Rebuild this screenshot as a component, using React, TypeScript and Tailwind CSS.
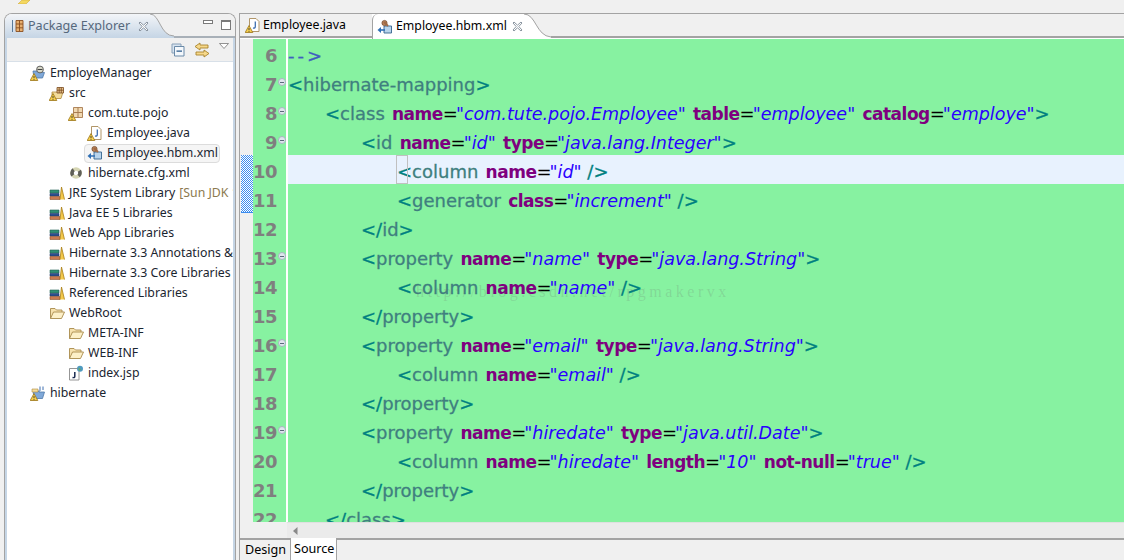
import type { ReactNode } from 'react';

type Token = { t: string; k: 'p' | 'n' | 'a' | 'e' | 'v' | 'c' | 's' };

const p = (t: string): Token => ({ t, k: 'p' });
const n = (t: string): Token => ({ t, k: 'n' });
const attr = (name: string, value: string): Token[] => [
  { t: ' ', k: 's' },
  { t: name, k: 'a' },
  { t: '=', k: 'e' },
  { t: `"${value}"`, k: 'v' },
];

const tokenClass = {
  p: 'text-[#008080] [-webkit-text-stroke:0.3px_#008080]',
  n: 'text-[#3f7f7f] [-webkit-text-stroke:0.3px_#3f7f7f]',
  a: 'text-[#7f007f] font-bold text-[17px] tracking-[-0.5px]',
  e: 'text-black tracking-[-2px]',
  v: 'text-[#2a00ff] italic text-[17.5px]',
  c: 'text-[#3f5fbf] [-webkit-text-stroke:0.3px_#3f5fbf] tracking-[3px]',
  s: 'tracking-[1.5px]',
};

const indentClass = ['pl-0', 'pl-[37px]', 'pl-[73px]', 'pl-[109px]'];

const lines: { no: number; indent: number; fold?: boolean; tokens: Token[] }[] = [
  { no: 6, indent: 0, tokens: [{ t: '-->', k: 'c' }] },
  { no: 7, indent: 0, fold: true, tokens: [p('<'), n('hibernate-mapping'), p('>')] },
  {
    no: 8,
    indent: 1,
    fold: true,
    tokens: [p('<'), n('class'), ...attr('name', 'com.tute.pojo.Employee'), ...attr('table', 'employee'), ...attr('catalog', 'employe'), p('>')],
  },
  { no: 9, indent: 2, fold: true, tokens: [p('<'), n('id'), ...attr('name', 'id'), ...attr('type', 'java.lang.Integer'), p('>')] },
  { no: 10, indent: 3, tokens: [p('<'), n('column'), ...attr('name', 'id'), p(' />')] },
  { no: 11, indent: 3, tokens: [p('<'), n('generator'), ...attr('class', 'increment'), p(' />')] },
  { no: 12, indent: 2, tokens: [p('</'), n('id'), p('>')] },
  { no: 13, indent: 2, fold: true, tokens: [p('<'), n('property'), ...attr('name', 'name'), ...attr('type', 'java.lang.String'), p('>')] },
  { no: 14, indent: 3, tokens: [p('<'), n('column'), ...attr('name', 'name'), p(' />')] },
  { no: 15, indent: 2, tokens: [p('</'), n('property'), p('>')] },
  { no: 16, indent: 2, fold: true, tokens: [p('<'), n('property'), ...attr('name', 'email'), ...attr('type', 'java.lang.String'), p('>')] },
  { no: 17, indent: 3, tokens: [p('<'), n('column'), ...attr('name', 'email'), p(' />')] },
  { no: 18, indent: 2, tokens: [p('</'), n('property'), p('>')] },
  { no: 19, indent: 2, fold: true, tokens: [p('<'), n('property'), ...attr('name', 'hiredate'), ...attr('type', 'java.util.Date'), p('>')] },
  {
    no: 20,
    indent: 3,
    tokens: [p('<'), n('column'), ...attr('name', 'hiredate'), ...attr('length', '10'), ...attr('not-null', 'true'), p(' />')],
  },
  { no: 21, indent: 2, tokens: [p('</'), n('property'), p('>')] },
  { no: 22, indent: 1, tokens: [p('</'), n('class'), p('>')] },
];

function Warn() {
  return (
    <g>
      <path d="M4 8.5 L7.8 15.5 H0.2 Z" fill="#f6d04d" stroke="#9a7415" strokeWidth="0.8" />
      <path d="M4 11 V13.2 M4 14 V14.8" stroke="#333" strokeWidth="0.9" />
    </g>
  );
}

function Svg({ children }: { children: ReactNode }) {
  return (
    <svg viewBox="0 0 16 16" className="w-4 h-4 shrink-0">
      {children}
    </svg>
  );
}

const ProjectIcon = () => (
  <Svg>
    <path d="M3 6 H8 L9 7.5 H14.5 L12.5 13 H4 Z" fill="#7fa8d8" stroke="#4f78a8" strokeWidth="0.8" />
    <circle cx="10" cy="4.5" r="3.4" fill="#d8d8c8" stroke="#555" strokeWidth="0.9" />
    <path d="M7.5 4.5 H12.5" stroke="#444" strokeWidth="1" />
    <Warn />
  </Svg>
);

const SrcIcon = () => (
  <Svg>
    <path d="M3 7 H14 L12 13.5 H3 Z" fill="#f3dc9b" stroke="#b08a3c" strokeWidth="0.8" />
    <path d="M8 2.5 H14.5 V8 H8 Z M10.2 2.5 V8 M12.3 2.5 V8 M8 5.2 H14.5" fill="#e8c48c" stroke="#7a4a20" strokeWidth="0.8" />
    <Warn />
  </Svg>
);

const PackageIcon = () => (
  <Svg>
    <path d="M5.5 2.5 H14.5 V12.5 H5.5 Z" fill="#f0d8b0" stroke="#a87c50" strokeWidth="0.9" />
    <path d="M10 2.5 V12.5 M5.5 7.5 H14.5" stroke="#a87c50" strokeWidth="1" />
    <Warn />
  </Svg>
);

const JavaIcon = () => (
  <Svg>
    <path d="M4.5 1.5 H11 L14 4.5 V14.5 H4.5 Z" fill="#fff" stroke="#a88a58" strokeWidth="0.9" />
    <path d="M10.3 4.5 V9.5 Q10.3 11.5 8 11" fill="none" stroke="#3f6fb0" strokeWidth="1.3" />
    <Warn />
  </Svg>
);

const HbmIcon = () => (
  <Svg>
    <path d="M7 7 H14.5 V14 H7 Z" fill="#b8d4ec" stroke="#35658f" strokeWidth="0.9" />
    <circle cx="7.5" cy="4" r="2.6" fill="#b9825a" stroke="#6f4526" strokeWidth="0.7" />
    <path d="M7 3 L11 7" stroke="#a06a44" strokeWidth="2" />
    <path d="M0.5 11 L4 8 V14 Z" fill="#2f6fb5" />
    <path d="M4 10.2 H8 V11.8 H4 Z" fill="#2f6fb5" />
  </Svg>
);

const CfgIcon = () => (
  <Svg>
    <circle cx="8" cy="8" r="4" fill="none" stroke="#d6d6b4" strokeWidth="3.6" />
    <circle cx="8" cy="8" r="4" fill="none" stroke="#5f5f58" strokeWidth="3.6" strokeDasharray="6.3 6.3" strokeDashoffset="3" />
  </Svg>
);

const LibIcon = () => (
  <Svg>
    <path d="M1 5 H10 V8 H1 Z" fill="#2f8f74" stroke="#1f5f50" strokeWidth="0.6" />
    <path d="M1 8.5 H10 V11 H1 Z" fill="#2b4f8f" stroke="#1f3a6a" strokeWidth="0.6" />
    <path d="M1 11.5 H11 V14.5 H1 Z" fill="#c87a50" stroke="#8a5030" strokeWidth="0.6" />
    <path d="M11 14.5 L12.5 2 L15.5 14.5" fill="#f4c94a" stroke="#a87f18" strokeWidth="0.8" />
  </Svg>
);

const FolderIcon = () => (
  <Svg>
    <path d="M1.5 13.5 V3.5 H6 L7.5 5 H13 V7" fill="#f7e2ae" stroke="#a88a4c" strokeWidth="0.9" />
    <path d="M1.5 13.5 L4.5 7 H15.5 L12.5 13.5 Z" fill="#fdf0c8" stroke="#a88a4c" strokeWidth="0.9" />
  </Svg>
);

const JspIcon = () => (
  <Svg>
    <path d="M1.5 3.5 H11 V15 H1.5 Z" fill="#fff" stroke="#8a8a8a" strokeWidth="0.9" />
    <path d="M6.8 7 V11.5 Q6.8 13 4.5 12.5" fill="none" stroke="#1a2a50" strokeWidth="1.5" />
    <circle cx="12" cy="3.8" r="3" fill="#4f9ac0" />
    <path d="M10.5 2.5 L13 4.5 L11 6" fill="#69a85a" />
  </Svg>
);

const HibernateIcon = () => (
  <Svg>
    <path d="M3 5.5 H8 L9 7 H14.5 L12.5 13.5 H4 Z" fill="#7fa8d8" stroke="#4f78a8" strokeWidth="0.8" />
    <path d="M10 1.5 V5.5 Q10 6.5 8.5 6 M13 1.5 V5" fill="none" stroke="#3f6fb0" strokeWidth="1" />
    <path d="M2 4 H8 V7 H2 Z" fill="#f3dc9b" stroke="#b08a3c" strokeWidth="0.6" />
    <Warn />
  </Svg>
);

const treeIndent = ['pl-[23px]', 'pl-[42px]', 'pl-[61px]', 'pl-[80px]'];

const tree: { label: string; level: number; icon: ReactNode; extra?: string; selected?: boolean }[] = [
  { label: 'EmployeManager', level: 0, icon: <ProjectIcon /> },
  { label: 'src', level: 1, icon: <SrcIcon /> },
  { label: 'com.tute.pojo', level: 2, icon: <PackageIcon /> },
  { label: 'Employee.java', level: 3, icon: <JavaIcon /> },
  { label: 'Employee.hbm.xml', level: 3, icon: <HbmIcon />, selected: true },
  { label: 'hibernate.cfg.xml', level: 2, icon: <CfgIcon /> },
  { label: 'JRE System Library', level: 1, icon: <LibIcon />, extra: '[Sun JDK 1.6.0_13]' },
  { label: 'Java EE 5 Libraries', level: 1, icon: <LibIcon /> },
  { label: 'Web App Libraries', level: 1, icon: <LibIcon /> },
  { label: 'Hibernate 3.3 Annotations & Entity Manager', level: 1, icon: <LibIcon /> },
  { label: 'Hibernate 3.3 Core Libraries', level: 1, icon: <LibIcon /> },
  { label: 'Referenced Libraries', level: 1, icon: <LibIcon /> },
  { label: 'WebRoot', level: 1, icon: <FolderIcon /> },
  { label: 'META-INF', level: 2, icon: <FolderIcon /> },
  { label: 'WEB-INF', level: 2, icon: <FolderIcon /> },
  { label: 'index.jsp', level: 2, icon: <JspIcon /> },
  { label: 'hibernate', level: 0, icon: <HibernateIcon /> },
];

function CloseX({ className }: { className: string }) {
  return (
    <svg viewBox="0 0 11 11" className={`w-[11px] h-[11px] shrink-0 ${className}`}>
      <path d="M2 1 L5.5 4.2 L9 1 L10 2 L6.8 5.5 L10 9 L9 10 L5.5 6.8 L2 10 L1 9 L4.2 5.5 L1 2 Z" fill="#fff" stroke="#7f8a96" strokeWidth="0.9" />
    </svg>
  );
}

function PackagePanel() {
  return (
    <div className="w-[232px] ml-1 shrink-0 flex flex-col border-x border-t border-[#a3a3a3] rounded-t-lg bg-white overflow-hidden">
      <div className="h-6 shrink-0 flex items-stretch bg-[#f0f0f0]">
        <div className="w-[145px] shrink-0 flex items-center bg-linear-to-b from-[#f3f5f8] to-[#c5d5e5]">
          <svg viewBox="0 0 14 14" className="w-[14px] h-[14px] ml-[6px] shrink-0">
            <path d="M1.5 1 V13" stroke="#5a7a9a" strokeWidth="1" />
            <path d="M5 1.5 H12 V12.5 H5 Z M5 5 H12 M5 8.8 H12 M8.5 1.5 V12.5" fill="#e8b070" stroke="#8a4f20" strokeWidth="0.9" />
          </svg>
          <span className="ml-[3px] text-[12.6px] text-[#56687c]">Package Explorer</span>
          <CloseX className="ml-[8px]" />
        </div>
        <svg viewBox="0 0 24 24" className="w-6 h-6 shrink-0">
          <defs>
            <linearGradient id="tabFade" x1="0" y1="0" x2="0" y2="1">
              <stop offset="0" stopColor="#f3f5f8" />
              <stop offset="1" stopColor="#c5d5e5" />
            </linearGradient>
          </defs>
          <path d="M0 0 C10 0 10 22 24 22 V24 H0 Z" fill="url(#tabFade)" />
          <path d="M0 0 C10 0 10 22 24 22" fill="none" stroke="#a3a3a3" />
        </svg>
        <div className="flex-1 flex items-center justify-end border-b-2 border-[#a8b0b8] pr-[4px] gap-[8px]">
          <div className="w-[10px] h-[4px] border border-[#7a7a7a] bg-white mb-[6px]" />
          <div className="w-[10px] h-[10px] border border-[#7a7a7a] border-t-2 bg-white" />
        </div>
      </div>
      <div className="flex-1 min-h-0 flex flex-col border-x-2 border-[#c5d5e5]">
        <div className="h-6 shrink-0 flex items-center justify-end bg-[#f0f0f0] border-b border-[#d8e0e8] pr-[4px] gap-[9px]">
          <svg viewBox="0 0 14 14" className="w-[14px] h-[14px]">
            <path d="M1 1 H10 V10 H1 Z" fill="#d8e4f0" stroke="#88a0b8" />
            <path d="M3.5 3.5 H13 V13 H3.5 Z" fill="#f4f8fc" stroke="#6a8aa8" />
            <path d="M5.5 8.2 H11" stroke="#2a5a8a" strokeWidth="1.3" />
          </svg>
          <svg viewBox="0 0 16 16" className="w-4 h-4">
            <path d="M6 1 L1 4.5 L6 8 V6 H14 V3 H6 Z" fill="#f6d88a" stroke="#a8842c" strokeWidth="0.9" />
            <path d="M10 8 L15 11.5 L10 15 V13 H2 V10 H10 Z" fill="#f6d88a" stroke="#a8842c" strokeWidth="0.9" />
          </svg>
          <svg viewBox="0 0 10 6" className="w-[10px] h-[6px] mb-[7px]">
            <path d="M0.5 0.5 H9.5 L5 5.5 Z" fill="#fff" stroke="#777" strokeWidth="0.8" />
          </svg>
        </div>
        <div className="flex-1 pt-px overflow-hidden text-[12.3px] text-[#1a2530]">
          {tree.map((row) => (
            <div key={row.label} className={`h-5 flex items-center whitespace-nowrap ${treeIndent[row.level]}`}>
              <div
                className={`h-[19px] flex items-center rounded-sm ${row.selected ? 'bg-[#f5f5f5] border border-[#dcdcdc] -ml-[3px] pl-[2px] pr-px' : ''}`}
              >
                {row.icon}
                <span className="ml-1">{row.label}</span>
              </div>
              {row.extra && <span className="text-[#8c7a50] ml-1">{row.extra}</span>}
            </div>
          ))}
        </div>
      </div>
    </div>
  );
}

function EditorTabs() {
  return (
    <div className="h-[26px] shrink-0 flex items-stretch border-t border-[#a3a3a3] bg-white text-[12.3px] text-black">
      <div className="w-[132px] mb-px shrink-0 flex items-center pl-[5px] bg-[#f0f0f0] border-b-2 border-[#a3a3a3]">
        <JavaIcon />
        <span className="ml-[2px]">Employee.java</span>
      </div>
      <div className="w-[152px] shrink-0 flex items-center pl-[4px] bg-white border-l border-[#a3a3a3] rounded-tl-md">
        <HbmIcon />
        <span className="ml-[3px]">Employee.hbm.xml</span>
        <CloseX className="ml-[5px]" />
      </div>
      <svg viewBox="0 0 27 25" className="w-[27px] h-[25px] shrink-0 bg-[#f0f0f0]">
        <path d="M0 0 C12 0 12 22 27 23 V25 H0 Z" fill="#fff" />
        <path d="M0 0 C12 0 12 22 27 23" fill="none" stroke="#a3a3a3" />
      </svg>
      <div className="flex-1 mb-px bg-[#f0f0f0] border-b-2 border-[#a3a3a3]" />
    </div>
  );
}

function CodeArea() {
  return (
    <div className="h-[483px] shrink-0 overflow-hidden relative bg-[#f0f0f0] font-['DejaVu_Sans',sans-serif] text-[18px]">
      {lines.map((line) => (
        <div key={line.no} className="h-[29px] flex items-stretch whitespace-pre">
          <div className="w-3 ml-px shrink-0" />
          <div className="w-[33px] shrink-0 bg-[#87f2a1] flex items-center justify-end relative pr-[9px] pt-1 text-[#7f7f7f] font-bold text-[18px] tracking-[-0.5px]">
            {line.no}
            {line.fold && (
              <span className="absolute right-0 top-[10px] w-[8px] h-[8px] rounded-full bg-[#dfe6ee] border border-[#a8b4c0] flex items-center justify-center">
                <span className="w-1 h-px bg-[#5a6a7a]" />
              </span>
            )}
          </div>
          <div
            className={`flex-1 flex items-center pt-1 border-l-[2px] border-white ${line.no === 10 ? 'bg-[#e8f2fe]' : 'bg-[#87f2a1]'} ${indentClass[line.indent]}`}
          >
            <div>
              {line.tokens.map((tok, i) => (
                <span key={i} className={tokenClass[tok.k]}>
                  {tok.t}
                </span>
              ))}
            </div>
          </div>
        </div>
      ))}
      {/* matching bracket box on line 10 */}
      <div className="absolute left-[156px] top-[116px] w-3 h-[29px] border border-[#c0c0c0]" />
      <svg className="absolute left-px top-[116px] w-3 h-[58px]">
        <defs>
          <pattern id="dither" width="2" height="2" patternUnits="userSpaceOnUse">
            <rect width="2" height="2" fill="#ffffff" />
            <rect width="1" height="1" fill="#3b8cf0" />
            <rect x="1" y="1" width="1" height="1" fill="#3b8cf0" />
          </pattern>
        </defs>
        <rect width="12" height="58" fill="url(#dither)" />
        <rect y="57" width="12" height="1" fill="#3b8cf0" />
      </svg>
      <div className="absolute left-[176px] top-[241px] font-['Liberation_Serif',serif] text-[16px] tracking-[3.5px] text-[#6a6a6a]/20 whitespace-pre">
        http://blog.csdn.net/rpgmakervx
      </div>
    </div>
  );
}

function EditorPanel() {
  return (
    <div className="flex-1 ml-[3px] min-w-0 flex flex-col border-l border-[#a3a3a3] bg-[#f0f0f0]">
      <EditorTabs />
      <CodeArea />
      <div className="h-4 shrink-0 flex items-center bg-[#f0f0f0]">
        <div className="ml-[47px] flex-1 h-full bg-[#ebebeb] border-t border-[#e0e0e0] flex items-center pl-[6px]">
          <svg viewBox="0 0 5 8" className="w-[5px] h-2">
            <path d="M4.5 0 L0 4 L4.5 8 Z" fill="#8a8a8a" />
          </svg>
        </div>
      </div>
      <div className="h-[22px] shrink-0 flex border-t-2 border-[#a3a3a3] text-[12.6px] pl-[2px]">
        <div className="w-[48px] flex items-center pl-[3px] text-black">Design</div>
        <div className="w-[47px] flex items-center pl-[3px] bg-white border-x border-[#a3a3a3] -mt-[2px] text-black">Source</div>
      </div>
    </div>
  );
}

export default function App() {
  return (
    <div className="w-[1124px] h-[560px] overflow-hidden bg-[#f0f0f0] flex flex-col font-['Noto_Sans',sans-serif]">
      <div className="h-[13px] shrink-0 pl-4 overflow-hidden">
        <svg viewBox="0 0 14 4" className="w-[14px] h-1">
          <path d="M2 4 L6 0 H14 L10 4 Z" fill="#f4d860" stroke="#c8a030" strokeWidth="0.5" />
        </svg>
      </div>
      <div className="flex-1 min-h-0 flex items-stretch">
        <PackagePanel />
        <EditorPanel />
      </div>
    </div>
  );
}
